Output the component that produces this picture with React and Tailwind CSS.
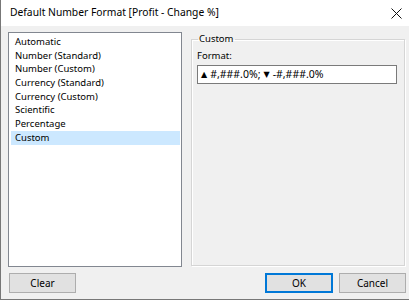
import React from 'react';

const items = [
  'Automatic',
  'Number (Standard)',
  'Number (Custom)',
  'Currency (Standard)',
  'Currency (Custom)',
  'Scientific',
  'Percentage',
  'Custom',
];

const Btn = ({ children, primary, className = '' }) => (
  <button
    className={`h-[20px] bg-[#e1e1e1] text-[10px] text-black leading-none border ${
      primary ? 'border-[#0078d7] shadow-[inset_0_0_0_1px_#0078d7]' : 'border-[#adadad]'
    } ${className}`}
  >
    {children}
  </button>
);

const tri = 'text-[8px] font-["DejaVu_Sans"]';

export default function App() {
  return (
    <div
      className="w-[409px] h-[300px] flex flex-col bg-[#f0f0f0] border-l border-b border-[#777] text-black"
      style={{ fontFamily: '"Noto Sans", "Liberation Sans", sans-serif' }}
    >
      {/* title bar */}
      <div className="h-[26px] shrink-0 bg-white flex items-center justify-between pl-[9px] pr-[6px]">
        <span className="text-[10.3px] text-black">Default Number Format [Profit - Change %]</span>
        <svg width="11" height="11" viewBox="0 0 11 11" className="mr-[1px]">
          <path d="M0.5 0.5 L10.5 10.5 M10.5 0.5 L0.5 10.5" stroke="#111" strokeWidth="1" fill="none" />
        </svg>
      </div>

      <div className="flex-1 flex flex-col pt-[6px] pl-[7px] pr-[3px] pb-[6px]">
        <div className="flex items-start">
          {/* list box */}
          <div className="w-[174px] h-[235px] bg-white border border-[#828790] pt-[2px] pl-[2px] pr-[1px]">
            {items.map((it) => (
              <div
                key={it}
                className={`h-[13.7px] leading-[13.7px] pl-[4px] text-[9.5px] ${
                  it === 'Custom' ? 'bg-[#cce8ff]' : ''
                }`}
              >
                {it}
              </div>
            ))}
          </div>

          {/* group box */}
          <fieldset className="ml-[9px] mt-[1px] w-[214px] h-[233px] border border-[#d5d5d5] shadow-[inset_1px_1px_0_#fff,1px_1px_0_#fff] pl-[5px] pr-[7px]">
            <legend className="ml-[1px] px-[1px] text-[9.5px] leading-[12px]">Custom</legend>
            <div className="mt-[4px] text-[9.5px] leading-[14px]">Format:</div>
            <div className="mt-[2px] h-[19px] bg-white border border-[#7a7a7a] flex items-center pl-[3px] text-[10.5px] whitespace-nowrap">
              <span className={`${tri} mr-[3px]`}>▲</span>
              <span>#,###.0%;</span>
              <span className={`${tri} ml-[3px] mr-[3px]`}>▼</span>
              <span>-#,###.0%</span>
            </div>
          </fieldset>
        </div>

        <div className="mt-[6px] flex items-center">
          <Btn className="w-[67px] ml-[1px]">Clear</Btn>
          <div className="flex-1" />
          <Btn primary className="w-[68px]">OK</Btn>
          <Btn className="w-[67px] ml-[6px]">Cancel</Btn>
        </div>
      </div>
    </div>
  );
}
